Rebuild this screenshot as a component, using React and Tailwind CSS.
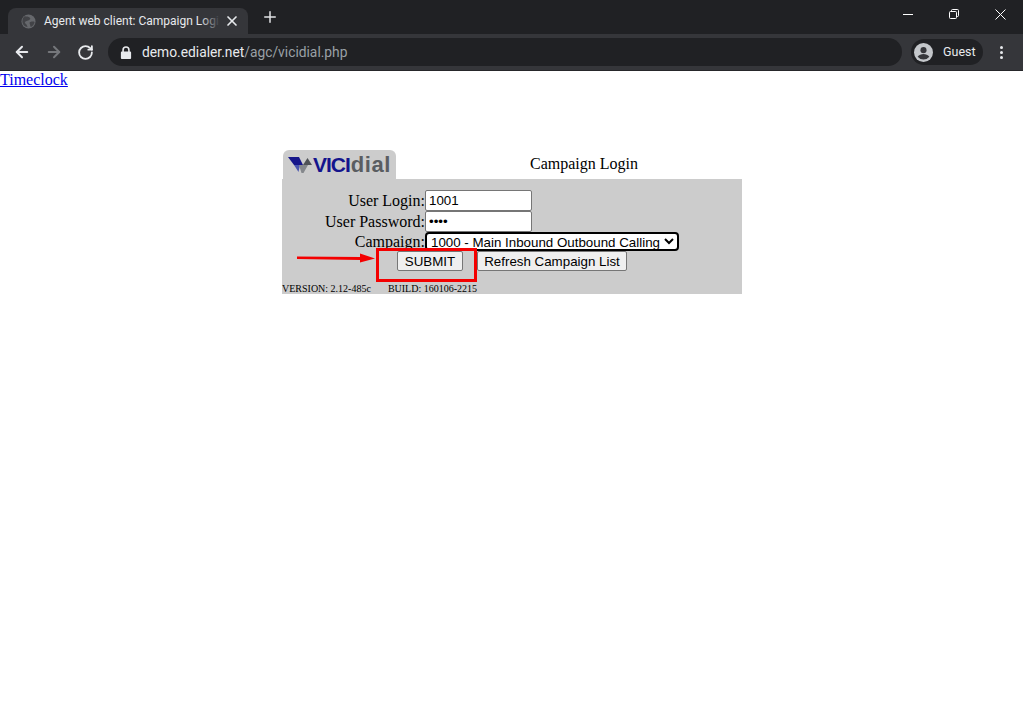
import { ArrowLeft, ArrowRight, RotateCw, Plus, X } from "lucide-react";

function BrowserChrome() {
  return (
    <div className="font-['Roboto',sans-serif]">
      {/* Tab strip */}
      <div className="h-[34px] bg-[#202124] flex items-end pl-2">
        <div className="relative w-[240px] h-[26px] bg-[#35363a] rounded-t-lg flex items-center pl-[13px]">
          <svg className="w-[15px] h-[15px] shrink-0" viewBox="0 0 16 16">
            <circle cx="8" cy="8" r="7.5" fill="#66686c" />
            <path d="M4 2.500c2 .5 4 0 5.500 1.500S8 7 6 7.500s-2.500 2-1 3 1.500 2.500 2 3.500C4 13.500 1.500 11 1.500 8 1.500 5.500 2.500 3.500 4 2.500z" fill="#424347" />
            <path d="M10 8.500c2-.5 3.500-.5 4.500 0-.3 2.500-2 4.500-4 5.300-.8-1-.5-2-1-3s-.5-2 .5-2.300z" fill="#424347" />
          </svg>
          <span className="ml-[8px] w-[176px] whitespace-nowrap text-[12px] leading-[16px] text-[#e8eaed]">
            Agent web client: Campaign Logi
          </span>
          <div className="absolute left-[192px] top-0 h-full w-[20px] bg-gradient-to-r from-transparent to-[#35363a]"></div>
          <X className="absolute left-[216px] top-[5px] w-[16px] h-[16px] text-[#e8eaed]" strokeWidth={2.5} />
        </div>
        <div className="ml-[13px] mb-[8px] text-[#e0e2e5]">
          <Plus className="w-[18px] h-[18px]" strokeWidth={2} />
        </div>
        <div className="ml-auto self-start flex items-center h-[28px] text-[#e8eaed]">
          <div className="w-[46px] flex justify-center">
            <div className="w-[10px] h-px bg-white"></div>
          </div>
          <div className="w-[46px] flex justify-center">
            <svg className="w-[10px] h-[10px]" viewBox="0 0 10 10" fill="none" stroke="white" strokeWidth="1">
              <rect x="0.5" y="2.5" width="7" height="7" rx="1" />
              <path d="M2.5 2.5V1.5a1 1 0 0 1 1-1h5a1 1 0 0 1 1 1v5a1 1 0 0 1-1 1h-1" />
            </svg>
          </div>
          <div className="w-[46px] flex justify-center">
            <svg className="w-[11px] h-[11px]" viewBox="0 0 11 11" fill="none" stroke="white" strokeWidth="1">
              <path d="M0.5 0.5l10 10M10.5 0.5l-10 10" />
            </svg>
          </div>
        </div>
      </div>

      {/* Toolbar */}
      <div className="h-[37px] bg-[#35363a] border-b border-[#26272a] flex items-center">
        <div className="w-[108px] flex items-center pl-[13px] gap-[14px] shrink-0">
          <ArrowLeft className="w-[18px] h-[18px] text-[#e8eaed]" strokeWidth={2.6} />
          <ArrowRight className="w-[18px] h-[18px] text-[#75777b]" strokeWidth={2.6} />
          <RotateCw className="w-[17px] h-[17px] text-[#e8eaed]" strokeWidth={2.6} />
        </div>
        <div className="w-[794px] h-[28px] bg-[#202124] rounded-full flex items-center pl-[11px] text-[13.800px] shrink-0">
          <svg className="w-[12px] h-[13px] ml-[1px]" viewBox="0 0 12 14" fill="#e8eaed">
            <path d="M2 6V4.2a4 4 0 0 1 8 0V6h.5A1 1 0 0 1 11.500 7v6a1 1 0 0 1-1 1h-9a1 1 0 0 1-1-1V7a1 1 0 0 1 1-1zm1.700 0h4.600V4.200a2.300 2.300 0 0 0-4.600 0z" />
          </svg>
          <span className="ml-[10px] text-[#e8eaed]">demo.edialer.net</span>
          <span className="text-[#9aa0a6]">/agc/vicidial.php</span>
        </div>
        <div className="ml-[9px] w-[72px] h-[26px] bg-[#202124] rounded-full flex items-center pl-[3px] shrink-0">
          <svg className="w-[19px] h-[19px]" viewBox="0 0 20 20">
            <circle cx="10" cy="10" r="10" fill="#c4c7cb" />
            <circle cx="10" cy="7.500" r="3.200" fill="#35363a" />
            <path d="M3.800 14.500c1.500-2.200 3.800-3 6.200-3s4.700.8 6.200 3a8 8 0 0 1-12.400 0z" fill="#35363a" />
          </svg>
          <span className="ml-[10px] text-[12.500px] text-[#e8eaed]">Guest</span>
        </div>
        <div className="ml-[17px] flex flex-col gap-[2px]">
          <div className="w-[3px] h-[3px] rounded-full bg-[#e8eaed]"></div>
          <div className="w-[3px] h-[3px] rounded-full bg-[#e8eaed]"></div>
          <div className="w-[3px] h-[3px] rounded-full bg-[#e8eaed]"></div>
        </div>
      </div>
    </div>
  );
}

function Row({ label, children }) {
  return (
    <div className="flex items-center">
      <div className="w-[143px] shrink-0 text-right text-[16px] leading-[18px] text-black">{label}</div>
      <div className="flex">{children}</div>
    </div>
  );
}

export default function App() {
  return (
    <div className="min-h-[728px] bg-white font-['Liberation_Serif',serif]">
      <BrowserChrome />

      <a href="#" className="block w-fit text-[16px] leading-[18px] text-[#0000ee] underline">
        Timeclock
      </a>

      {/* Login form */}
      <div className="relative ml-[282px] mt-[61px] w-[460px]">
        <div className="flex items-end h-[29px]">
          <div className="ml-px w-[113px] h-[29px] bg-[#cccccc] rounded-t-md flex items-center pl-[5px]">
            <svg className="w-[24px] h-[17px] shrink-0" viewBox="0 0 24 17">
              <path d="M0 1h11l4 8H6z" fill="#16168a" />
              <path d="M6 9h6l-1.500 7z" fill="#4a55b0" />
              <path d="M11 9h9l-4.500 8h-2z" fill="#85888c" />
              <path d="M15 9l4.500-7L24 9z" fill="#4f5256" />
            </svg>
            <span className="ml-[1px] font-['Liberation_Sans',sans-serif] text-[21px] leading-none font-bold tracking-[-1px] text-[#14148c]">VICI</span>
            <span className="ml-[1px] font-['Liberation_Sans',sans-serif] text-[22px] leading-none font-bold tracking-[0.5px] text-[#5a5d61]">dial</span>
          </div>
          <div className="flex-1 text-center text-[16px] leading-[18px] text-black pb-[6px] pl-[30px]">Campaign Login</div>
        </div>

        <div className="h-[115px] bg-[#cccccc] pt-[11px] flex flex-col">
          <Row label="User Login:">
            <input
              defaultValue="1001"
              className="w-[107px] h-[21px] bg-white border border-[#767676] rounded-[2px] px-[3px] text-[13.330px] text-black font-['Liberation_Sans',sans-serif]"
            />
          </Row>
          <Row label="User Password:">
            <input
              type="password"
              defaultValue="1001"
              className="w-[107px] h-[21px] bg-white border border-[#767676] rounded-[2px] px-[3px] text-[13.330px] text-black font-['Liberation_Sans',sans-serif]"
            />
          </Row>
          <Row label="Campaign:">
            <select className="w-[254px] h-[19px] bg-white border-2 border-black rounded-[4px] text-[13.330px] leading-none text-black font-['Liberation_Sans',sans-serif]">
              <option>1000 - Main Inbound Outbound Calling</option>
            </select>
          </Row>
          <div className="flex items-center gap-[14px] pl-[115px] font-['Liberation_Sans',sans-serif] text-[13.330px] text-black">
            <button className="w-[66px] h-[20px] bg-[#efefef] border border-[#767676] rounded-[2px]">SUBMIT</button>
            <button className="w-[150px] h-[20px] bg-[#efefef] border border-[#767676] rounded-[2px]">Refresh Campaign List</button>
          </div>
          <div className="mt-auto text-[10px] leading-[11px] text-black flex gap-[17px] whitespace-nowrap">
            <span>VERSION: 2.12-485c</span>
            <span>BUILD: 160106-2215</span>
          </div>
        </div>

        {/* Red annotations */}
        <div className="absolute left-[94px] top-[98px] w-[101px] h-[34px] border-[3px] border-[#f40000]"></div>
        <svg className="absolute left-[15px] top-[102px] w-[80px] h-[12px]" viewBox="0 0 80 12">
          <path d="M0 4.500l64 .5v3L0 7z" fill="#f40000" />
          <path d="M63 1.500l15 5-15 4z" fill="#f40000" />
        </svg>
      </div>
    </div>
  );
}
